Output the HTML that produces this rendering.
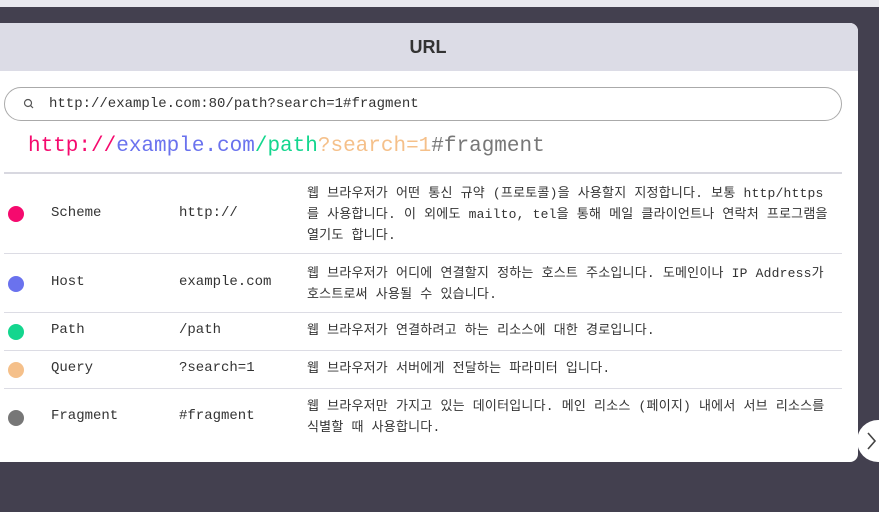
<!DOCTYPE html>
<html><head><meta charset="utf-8"><style>
*{margin:0;padding:0;box-sizing:border-box}
body{width:879px;height:512px;overflow:hidden;background:#43404f;position:relative;font-family:"Liberation Mono","Noto Sans CJK KR",monospace;color:#333}
.top{position:absolute;left:0;top:0;width:879px;height:7px;background:#e8e8ee}
.card{position:absolute;left:-10px;top:23px;width:868px;height:439px;background:#fff;border-radius:8px;overflow:hidden}
.hd{height:48px;background:#dcdce6;text-align:center;font:bold 18px/48px "Liberation Sans",sans-serif;color:#333;padding-left:8px}
.sb{position:absolute;left:14px;top:64px;width:838px;height:34px;border:1px solid #aaa;border-radius:17px;font-size:14px;line-height:32px;padding-left:44px;color:#333}
.sb svg{position:absolute;left:18px;top:10px}
.url{position:absolute;left:38px;top:110px;font-size:21px;line-height:28px}
.tb{position:absolute;left:14px;top:149px;width:838px;border-top:2px solid #d8d8e0}
.row{position:relative;border-bottom:1px solid #dcdce4;font-size:14px}
.row:last-child{border-bottom:none}
.dot{position:absolute;left:4px;width:16px;height:16px;border-radius:50%}
.c1{position:absolute;left:47px}
.c2{position:absolute;left:175px}
.c3{margin-left:303px;width:540px;font-size:13px;line-height:21px;padding:9px 0;white-space:nowrap;letter-spacing:0.2px}
.nx{position:absolute;left:857px;top:420px;width:44px;height:42px;border-radius:21px;background:#fff}
</style></head><body>
<div class="top"></div>
<div class="card">
<div class="hd">URL</div>
<div class="sb"><svg width="12" height="12" viewBox="0 0 12 12"><circle cx="5" cy="5" r="3.5" fill="none" stroke="#555" stroke-width="1.2"/><path d="M7.6 7.6L10 10" stroke="#555" stroke-width="1.2"/></svg>http://example.com:80/path?search=1#fragment</div>
<div class="url"><span style="color:#f50a6e">http://</span><span style="color:#6a72ee">example.com</span><span style="color:#14d68e">/path</span><span style="color:#f5c08a">?search=1</span><span style="color:#777">#fragment</span></div>
<div class="tb">
<div class="row" style="height:80px"><span class="dot" style="background:#f50a6e;top:32px"></span><span class="c1" style="top:31px">Scheme</span><span class="c2" style="top:31px">http://</span><div class="c3">웹 브라우저가 어떤 통신 규약 (프로토콜)을 사용할지 지정합니다. 보통 http/https<br>를 사용합니다. 이 외에도 mailto, tel을 통해 메일 클라이언트나 연락처 프로그램을<br>열기도 합니다.</div></div>
<div class="row" style="height:59px"><span class="dot" style="background:#6a72ee;top:22px"></span><span class="c1" style="top:20px">Host</span><span class="c2" style="top:20px">example.com</span><div class="c3">웹 브라우저가 어디에 연결할지 정하는 호스트 주소입니다. 도메인이나 IP Address가<br>호스트로써 사용될 수 있습니다.</div></div>
<div class="row" style="height:38px"><span class="dot" style="background:#14d68e;top:11px"></span><span class="c1" style="top:9px">Path</span><span class="c2" style="top:9px">/path</span><div class="c3" style="padding-top:7px">웹 브라우저가 연결하려고 하는 리소스에 대한 경로입니다.</div></div>
<div class="row" style="height:38px"><span class="dot" style="background:#f5c08a;top:11px"></span><span class="c1" style="top:9px">Query</span><span class="c2" style="top:9px">?search=1</span><div class="c3" style="padding-top:7px">웹 브라우저가 서버에게 전달하는 파라미터 입니다.</div></div>
<div class="row" style="height:59px"><span class="dot" style="background:#777;top:21px"></span><span class="c1" style="top:19px">Fragment</span><span class="c2" style="top:19px">#fragment</span><div class="c3" style="padding-top:7px">웹 브라우저만 가지고 있는 데이터입니다. 메인 리소스 (페이지) 내에서 서브 리소스를<br>식별할 때 사용합니다.</div></div>
</div>
</div>
<div class="nx"><svg width="22" height="42" viewBox="0 0 22 42"><path d="M11 13L18 21L11 29" fill="none" stroke="#444" stroke-width="1.6"/></svg></div>
</body></html>
